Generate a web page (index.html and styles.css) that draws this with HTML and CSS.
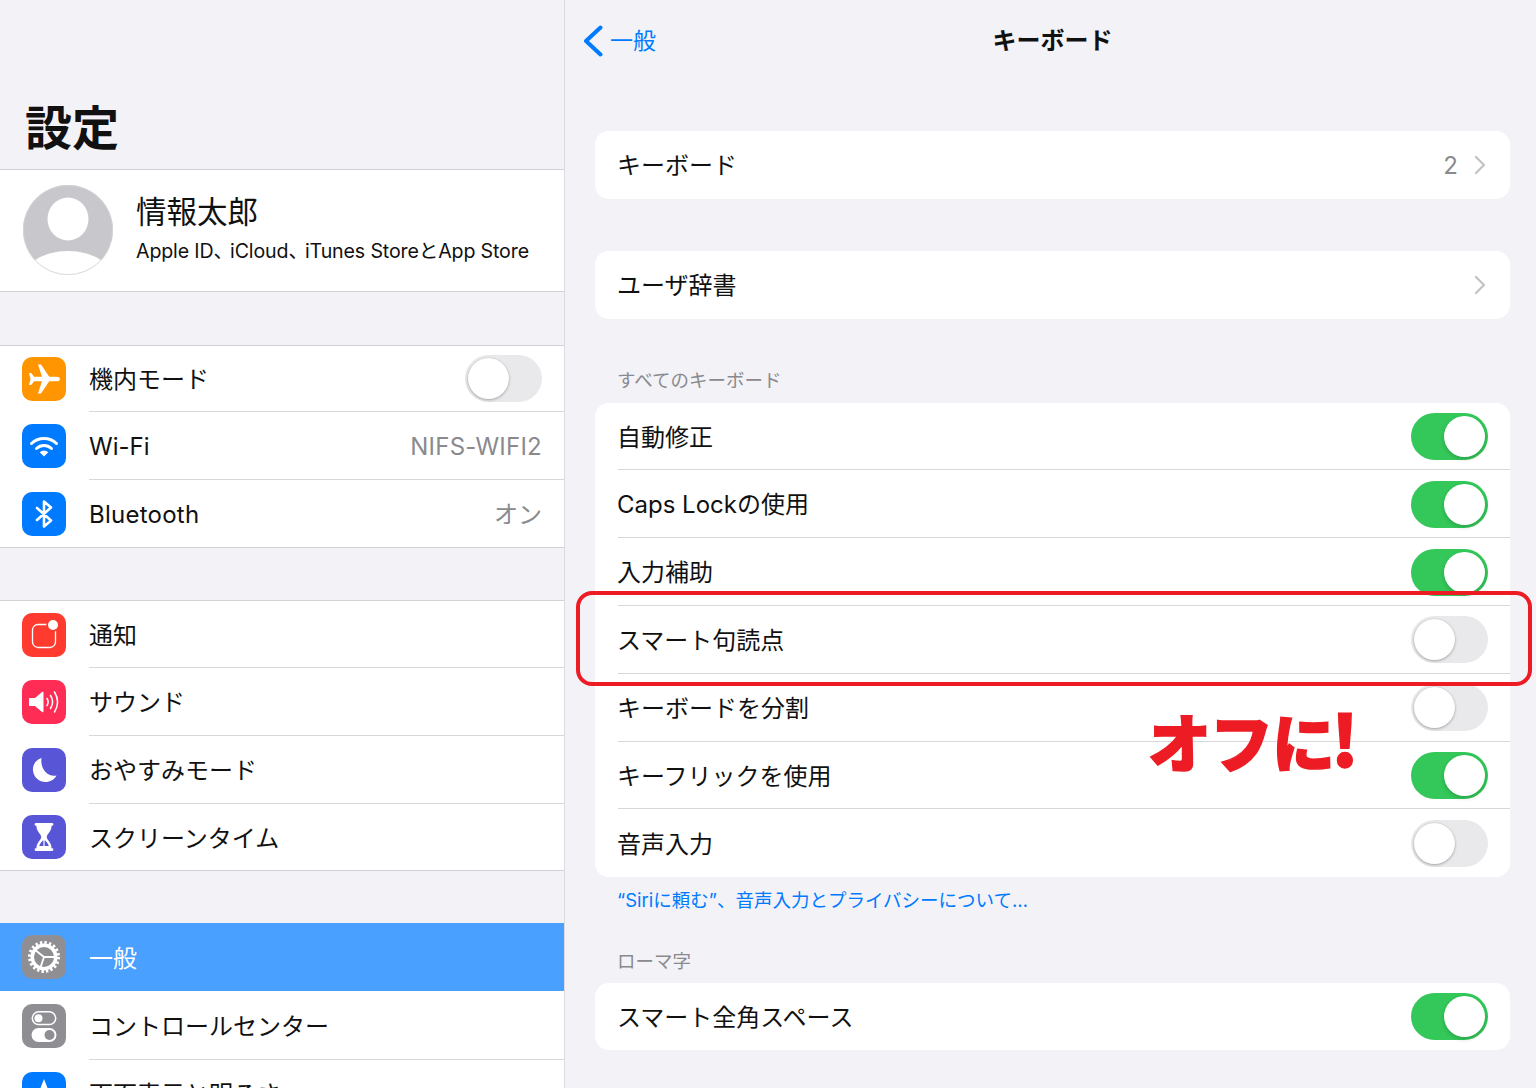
FILE: index.html
```html
<!DOCTYPE html>
<html lang="ja">
<head>
<meta charset="utf-8">
<title>キーボード</title>
<link rel="stylesheet" href="styles.css">
</head>
<body>
<div class="app">
  <aside class="side">
    <h1 class="side-title">設定</h1>
    <section class="profile">
      <svg class="avatar" viewBox="0 0 90 90"><defs><clipPath id="av"><circle cx="45" cy="45" r="45"/></clipPath></defs><circle cx="45" cy="45" r="45" fill="#c7c7cc"/><g clip-path="url(#av)"><ellipse cx="45" cy="34" rx="20.5" ry="21.5" fill="#fff"/><ellipse cx="45" cy="96" rx="46" ry="30" fill="#fff"/></g><circle cx="45" cy="45" r="44.6" fill="none" stroke="#d4d4d8" stroke-width=".8"/></svg>
      <div class="profile-text">
        <div class="profile-name">情報太郎</div>
        <div class="profile-sub">Apple ID<span class="cm">、</span>iCloud<span class="cm">、</span>iTunes StoreとApp Store</div>
      </div>
    </section>

    <section class="group g1">
      <div class="row"><span class="ico orange"><svg viewBox="0 0 44 44"><path fill="#fff" d="M38 22c0-1.400-1.600-2.300-3.400-2.300h-7.400L19 7.500h-3l4 12.200h-8L9.300 16H7l1.600 6L7 28h2.300l2.700-3.700h8l-4 12.200h3l8.200-12.200h7.400C36.400 24.300 38 23.400 38 22z"/></svg></span><div class="body"><span class="label">機内モード</span><span class="sw off"><i></i></span></div></div>
      <div class="row"><span class="ico blue"><svg viewBox="0 0 44 44"><g fill="none" stroke="#fff" stroke-width="3" stroke-linecap="round"><path d="M9.500 19.500a18 18 0 0 1 25 0"/><path d="M14.500 24.500a11 11 0 0 1 15 0"/></g><path fill="#fff" d="M22 32.500l-4.300-4.300a6.200 6.200 0 0 1 8.600 0z"/></svg></span><div class="body"><span class="label">Wi-Fi</span><span class="val wide">NIFS-WIFI2</span></div></div>
      <div class="row"><span class="ico blue"><svg viewBox="0 0 44 44"><path fill="none" stroke="#fff" stroke-width="2.600" stroke-linejoin="round" stroke-linecap="round" d="M15 16l14 12.500-7 6V9.500l7 6L15 28"/></svg></span><div class="body last"><span class="label wide">Bluetooth</span><span class="val">オン</span></div></div>
    </section>

    <section class="group g2">
      <div class="row"><span class="ico red"><svg viewBox="0 0 44 44"><rect x="10.500" y="11.500" width="23" height="23" rx="5.500" fill="none" stroke="#fff" stroke-width="1.300"/><circle cx="31" cy="12" r="6.800" fill="#ff3b30"/><circle cx="31" cy="12" r="5" fill="#fff"/></svg></span><div class="body"><span class="label">通知</span></div></div>
      <div class="row"><span class="ico pink"><svg viewBox="0 0 44 44"><path fill="#fff" d="M8 18h5l7-6c.8-.6 1.500-.2 1.500.8v18.400c0 1-.7 1.400-1.500.8l-7-6H8c-.6 0-1-.4-1-1v-6c0-.6.4-1 1-1z"/><g fill="none" stroke="#fff" stroke-width="1.500" stroke-linecap="round"><path d="M25 18.500c1.500 2.300 1.500 4.700 0 7"/><path d="M28.500 15.500c2.800 4.300 2.800 8.700 0 13"/><path d="M32.500 12c4 6.500 4 13.500 0 20"/></g></svg></span><div class="body"><span class="label">サウンド</span></div></div>
      <div class="row"><span class="ico indigo"><svg viewBox="0 0 44 44"><path fill="#fff" d="M19.500 10C13.500 12 10.500 17 11 22.500c.6 6.800 6.300 11.500 12.500 11.500 4.600 0 8.800-2.300 11-6.500-9 1.800-16.500-6.500-15-17.500z"/></svg></span><div class="body"><span class="label">おやすみモード</span></div></div>
      <div class="row"><span class="ico indigo"><svg viewBox="0 0 44 44"><path fill="#fff" d="M14 8h16a1.300 1.300 0 0 1 0 2.800h-.4c-.2 6.400-4.800 8-4.800 11.200s4.600 4.800 4.800 11.200h.4a1.300 1.300 0 0 1 0 2.800H14a1.300 1.300 0 0 1 0-2.800h.4c.2-6.400 4.800-8 4.800-11.200s-4.600-4.800-4.800-11.200H14A1.300 1.300 0 0 1 14 8z"/><path fill="#5856d6" d="M20.800 25.500c-1.500 1.500-3 3.100-3.500 5.500h4.100v-5.500zM23.200 25.500c1.500 1.500 3 3.100 3.500 5.500h-4.100v-5.500z"/></svg></span><div class="body last"><span class="label">スクリーンタイム</span></div></div>
    </section>

    <section class="group g3">
      <div class="row selected"><span class="ico gray"><svg viewBox="0 0 44 44"><g fill="none" stroke="#fff"><circle cx="22" cy="22" r="11.750" stroke-width="3.500"/><circle cx="22" cy="22" r="14.500" stroke-width="3" stroke-dasharray="2.400 2.155"/><path stroke-width="1.800" d="M22 22l-8.500-6.800M22 22h11M22 22l-3.500 10.400"/></g></svg></span><div class="body"><span class="label">一般</span></div></div>
      <div class="row"><span class="ico gray"><svg viewBox="0 0 44 44"><rect x="10.300" y="7.800" width="23.400" height="12.800" rx="6.400" fill="none" stroke="#fff" stroke-width="1.500"/><circle cx="16.500" cy="14.200" r="4" fill="#fff"/><rect x="9.500" y="24" width="25" height="14" rx="7" fill="#fff"/><circle cx="27.500" cy="31" r="5" fill="#8e8e93"/></svg></span><div class="body"><span class="label">コントロールセンター</span></div></div>
      <div class="row"><span class="ico blue"><svg viewBox="0 0 44 44"><path fill="#fff" d="M22 7l-7 18h3.500l1.500-4h4l1.500 4H29z"/></svg></span><div class="body"><span class="label">画面表示と明るさ</span></div></div>
    </section>
  </aside>

  <main class="main">
    <header class="nav">
      <a class="back"><svg class="back-ico" viewBox="0 0 20 32"><path fill="none" stroke="#007aff" stroke-width="4" stroke-linecap="round" stroke-linejoin="round" d="M17.500 2.500L3 16l14.500 13.500"/></svg><span class="back-text">一般</span></a>
      <div class="nav-title">キーボード</div>
    </header>

    <div class="card first">
      <div class="item"><span class="label">キーボード</span><span class="val num">2</span><svg class="chev" viewBox="0 0 12 20"><path fill="none" stroke="#c4c4c7" stroke-width="2.400" stroke-linecap="round" stroke-linejoin="round" d="M2 2l8 8-8 8"/></svg></div>
    </div>
    <div class="card second">
      <div class="item"><span class="label">ユーザ辞書</span><svg class="chev" viewBox="0 0 12 20"><path fill="none" stroke="#c4c4c7" stroke-width="2.400" stroke-linecap="round" stroke-linejoin="round" d="M2 2l8 8-8 8"/></svg></div>
    </div>

    <div class="sec-head h1">すべてのキーボード</div>
    <div class="card list">
      <div class="item"><span class="label">自動修正</span><span class="sw on"><i></i></span></div>
      <div class="item"><span class="label">Caps Lockの使用</span><span class="sw on"><i></i></span></div>
      <div class="item"><span class="label">入力補助</span><span class="sw on"><i></i></span></div>
      <div class="item"><span class="label">スマート句読点</span><span class="sw off"><i></i></span></div>
      <div class="item"><span class="label">キーボードを分割</span><span class="sw off"><i></i></span></div>
      <div class="item"><span class="label">キーフリックを使用</span><span class="sw on"><i></i></span></div>
      <div class="item"><span class="label">音声入力</span><span class="sw off"><i></i></span></div>
    </div>
    <div class="foot">“Siriに頼む”、音声入力とプライバシーについて…</div>

    <div class="sec-head h2">ローマ字</div>
    <div class="card">
      <div class="item"><span class="label">スマート全角スペース</span><span class="sw on"><i></i></span></div>
    </div>
  </main>

  <div class="callout-box"></div>
  <div class="callout-text">オフに<span class="bang">!</span></div>
</div>
</body>
</html>
```

FILE: styles.css
```css
* { box-sizing: border-box; }
html, body { margin: 0; padding: 0; }
body {
  font-family: Inter, "Noto Sans CJK JP", sans-serif;
  color: #111;
  background: #f2f2f7;
}
.app {
  position: relative;
  display: flex;
  width: 1536px;
  height: 1088px;
  overflow: hidden;
  background: #f2f2f7;
}

/* left column */
.side {
  width: 565px;
  flex: none;
  border-right: 1px solid #dcdce0;
}
.side-title {
  height: 169px;
  margin: 0;
  padding: 93px 0 0 25px;
  font-size: 47px;
  line-height: 64px;
  font-weight: 700;
  font-family: "Noto Sans CJK JP", sans-serif;
}
.profile {
  display: flex;
  align-items: center;
  height: 123px;
  padding: 0 0 2px 23px;
  gap: 23px;
  background: #fff;
  border-top: 1px solid #d1d1d6;
  border-bottom: 1px solid #d1d1d6;
}
.avatar { width: 90px; height: 90px; flex: none; }
.profile-name { font-size: 30.500px; line-height: 42px; margin-top: -4px; }
.profile-sub {
  font-size: 19.600px;
  line-height: 28px;
  margin-top: 4px;
  letter-spacing: -.14px;
  white-space: nowrap;
}
.cm { letter-spacing: -3px; }

.group {
  background: #fff;
  border-top: 1px solid #d1d1d6;
  border-bottom: 1px solid #d1d1d6;
}
.g1 { margin-top: 53px; }
.g2 { margin-top: 52px; }
.g3 { margin-top: 52px; border-top: 0; }
.row {
  display: flex;
  align-items: center;
  height: 68px;
  padding-left: 22px;
  gap: 23px;
}
.g1 .row:first-child { height: 66px; }
.g1 .row:last-child { height: 67px; }
.g2 .row:first-child { height: 67px; }
.g2 .row:last-child { height: 66px; }
.g3 .row:nth-child(2) { height: 69px; }
.row.selected { background: #4aa0ff; color: #fff; }
.ico {
  width: 44px;
  height: 44px;
  flex: none;
  border-radius: 10px;
  display: block;
}
.ico svg { display: block; width: 44px; height: 44px; }
.orange { background: #ff9500; }
.blue { background: #007aff; }
.red { background: #ff3b30; }
.pink { background: #ff2d55; }
.indigo { background: #5856d6; }
.gray { background: #8e8e93; }
.body {
  flex: 1;
  height: 100%;
  display: flex;
  align-items: center;
  justify-content: space-between;
  padding-right: 22px;
  border-bottom: 1px solid #d8d8dc;
  min-width: 0;
}
.body.last, .row.selected .body { border-bottom: 0; }
.label { font-size: 24px; line-height: 32px; padding-top: 3px; white-space: nowrap; }
.val { font-size: 24px; line-height: 32px; padding-top: 3px; color: #8a8a8e; }
.wide { letter-spacing: .25px; }

/* toggle */
.sw {
  width: 77px;
  height: 47px;
  flex: none;
  border-radius: 24px;
  display: flex;
  align-items: center;
  padding: 3px;
}
.sw i {
  display: block;
  width: 41px;
  height: 41px;
  border-radius: 50%;
  background: #fff;
}
.sw.on { background: #34c759; justify-content: flex-end; }
.sw.on i { box-shadow: 0 2px 4px rgba(0,0,0,.18); }
.sw.off { background: #e9e9eb; }
.sw.off i { box-shadow: 0 1px 3px rgba(0,0,0,.28), 0 0 0 .5px rgba(0,0,0,.06); }

/* right column */
.main {
  flex: 1;
  min-width: 0;
  padding: 0 26px 0 30px;
}
.nav {
  position: relative;
  display: flex;
  align-items: center;
  height: 81px;
}
.back {
  display: flex;
  align-items: center;
  gap: 7px;
  margin-left: -12px;
  color: #007aff;
  font-size: 23px;
}
.back-text { margin-top: -4px; }
.back-ico { width: 20px; height: 32px; flex: none; }
.nav-title {
  position: absolute;
  left: 0;
  right: 0;
  top: 22px;
  text-align: center;
  font-size: 24px;
  line-height: 34px;
  font-weight: 700;
  font-family: "Noto Sans CJK JP", sans-serif;
}
.card {
  background: #fff;
  border-radius: 14px;
  overflow: hidden;
}
.first { margin-top: 50px; }
.second { margin-top: 52.500px; }
.item {
  display: flex;
  align-items: center;
  height: 67.500px;
  margin-left: 23px;
  padding-right: 22px;
  border-bottom: 1px solid #d8d8dc;
}
.item:last-child { border-bottom: 0; }
.list .item { height: 67.900px; }
.list .item:first-child { height: 67px; }
.list .item:last-child { height: 67.500px; }
.list .sw { margin-top: 1.500px; }
.list .label { padding-top: 4px; }
.item .label { flex: 1; margin-left: -1px; }
.num { margin-right: 16px; }
.chev { width: 12px; height: 20px; flex: none; margin-right: 2px; }
.sec-head {
  font-size: 18.500px;
  line-height: 24px;
  color: #8a8a8e;
  padding-left: 22px;
}
.h1 { margin-top: 49.500px; margin-bottom: 11px; }
.h2 { margin-top: 37px; margin-bottom: 10px; }
.foot {
  margin-top: 11px;
  padding-left: 22px;
  font-size: 18.500px;
  line-height: 24px;
  color: #007aff;
}

/* annotation */
.callout-box {
  position: absolute;
  left: 576px;
  top: 591px;
  width: 956px;
  height: 95px;
  border: 4px solid #ed1c24;
  border-radius: 16px;
}
.callout-text {
  position: absolute;
  left: 1148px;
  top: 690px;
  font-family: "Noto Sans CJK JP", sans-serif;
  font-size: 63px;
  line-height: 100px;
  font-weight: 900;
  color: #ed1c24;
  letter-spacing: -1px;
  white-space: nowrap;
  -webkit-text-stroke: 1.500px #ed1c24;
}
.bang { font-size: 70px; line-height: 60px; margin-left: -3px; }
```
